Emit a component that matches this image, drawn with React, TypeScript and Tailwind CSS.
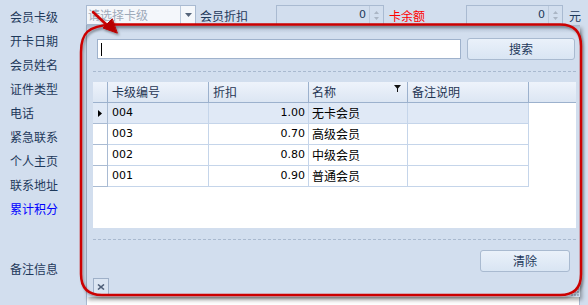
import React from 'react'

const labels = ['会员卡级', '开卡日期', '会员姓名', '证件类型', '电话', '紧急联系', '个人主页', '联系地址', '累计积分']

const rows = [
  { code: '004', rate: '1.00', name: '无卡会员', active: true },
  { code: '003', rate: '0.70', name: '高级会员', active: false },
  { code: '002', rate: '0.80', name: '中级会员', active: false },
  { code: '001', rate: '0.90', name: '普通会员', active: false },
]

function Spin({ width }: { width: string }) {
  return (
    <div className={`flex h-[20px] ${width} border border-[#a9bad1] bg-[#d2deee]`}>
      <div className="flex-1 pr-[3px] text-right font-['DejaVu_Sans',sans-serif] text-[11px] leading-[18px] text-[#1e395b]">0</div>
      <div className="flex w-[14px] flex-col items-center justify-center gap-[3px] border-l border-[#bccadc]">
        <svg width="5" height="3" viewBox="0 0 5 3"><path d="M0 3 L2.5 0 L5 3 Z" fill="#aab5c4" /></svg>
        <svg width="5" height="3" viewBox="0 0 5 3"><path d="M0 0 L2.5 3 L5 0 Z" fill="#aab5c4" /></svg>
      </div>
    </div>
  )
}

export default function App() {
  return (
    <div className="relative h-[305px] w-[588px] overflow-hidden bg-[#d2deee] font-['Noto_Sans_CJK_SC',sans-serif] text-[12px] text-[#1e395b]">
      {/* form underneath */}
      <div className="flex flex-col pt-[5px]">
        <div className="flex h-[24px] items-start">
          <div className="w-[86px] pl-[10px] leading-[24px]">{labels[0]}</div>
          <div className="flex h-[20px] w-[110px] border border-[#a9bad1] bg-[#f4f7fb]">
            <div className="flex-1 pl-[1px] leading-[18px] text-[#9eaaba]">请选择卡级</div>
            <div className="flex w-[15px] items-center justify-center border-l border-[#bccadc]">
              <svg width="7" height="4" viewBox="0 0 7 4"><path d="M0 0 L7 0 L3.5 4 Z" fill="#56657a" /></svg>
            </div>
          </div>
          <div className="w-[80px] pl-[4px] leading-[22px]">会员折扣</div>
          <Spin width="w-[108px]" />
          <div className="w-[82px] pl-[5px] leading-[22px] text-[#ff0000]">卡余额</div>
          <Spin width="w-[97px]" />
          <div className="pl-[6px] leading-[22px]">元</div>
        </div>
        {labels.slice(1).map((l) => (
          <div key={l} className={`h-[24px] w-[86px] pl-[10px] leading-[24px] ${l === '累计积分' ? 'text-[#0000ff]' : ''}`}>{l}</div>
        ))}
        <div className="mt-[24px] flex items-start">
          <div className="w-[86px] pl-[10px] pt-[12px] leading-[24px]">备注信息</div>
          <div className="h-[80px] w-[494px] border border-[#a9bad1] bg-white" />
        </div>
      </div>

      {/* lookup popup */}
      <div className="absolute left-[86px] top-[25px] flex h-[272px] w-[494px] flex-col border-l border-[#98a8bc] bg-[#d2deee] shadow-[2px_3px_4px_rgba(0,0,0,0.35)]">
        <div className="absolute inset-x-0 top-0 h-[8px] bg-linear-to-b from-[#a8b6ca] to-[#d2deee]" />
        <div className="relative mt-[13px] ml-[10px] flex items-center gap-[6px]">
          <div className="flex h-[20px] w-[364px] items-center border border-[#9fb2cc] bg-white pl-[3px]">
            <div className="h-[13px] w-[1px] bg-black" />
          </div>
          <div className="flex h-[22px] w-[108px] items-center justify-center rounded-[3px] border border-[#a9bad0] bg-linear-to-b from-[#eaf1fa] to-[#d9e5f3]">搜索</div>
        </div>
        <div className="mt-[11px] ml-[6px] w-[483px] border-t border-dashed border-[#a9b9cf]" />
        <div className="mt-[10px] ml-[6px] h-[146px] w-[483px] bg-white text-black">
          <div className="flex h-[21px] border-b border-[#9cb1cd] bg-linear-to-b from-[#eef3fb] to-[#dce6f3] text-[#1f3553]">
            <div className="w-[15px] border-r border-[#9cb1cd]" />
            <div className="w-[101px] border-r border-[#9cb1cd] pl-[4px] leading-[20px]">卡级编号</div>
            <div className="w-[100px] border-r border-[#9cb1cd] pl-[4px] leading-[20px]">折扣</div>
            <div className="relative w-[99px] border-r border-[#9cb1cd] pl-[3px] leading-[20px]">
              名称
              <svg className="absolute right-[6px] top-[3px]" width="7" height="7" viewBox="0 0 7 7"><path d="M0 0 H7 L4 3.5 V7 H3 V3.5 Z" fill="#111" /></svg>
            </div>
            <div className="w-[121px] border-r border-[#9cb1cd] pl-[4px] leading-[20px]">备注说明</div>
            <div className="flex-1" />
          </div>
          {rows.map((r) => (
            <div key={r.code} className={`flex h-[21px] w-[436px] ${r.active ? 'bg-[#e0e9f6]' : 'bg-white'}`}>
              <div className="flex w-[15px] items-center justify-center border-r border-b border-[#a9bbd3]">
                {r.active && <svg width="4" height="7" viewBox="0 0 4 7"><path d="M0 0 L4 3.5 L0 7 Z" fill="#000" /></svg>}
              </div>
              <div className="w-[101px] border-r border-b border-[#c5d5ea] pl-[4px] font-['DejaVu_Sans',sans-serif] text-[11px] leading-[20px]">{r.code}</div>
              <div className="w-[100px] border-r border-b border-[#c5d5ea] pr-[3px] text-right font-['DejaVu_Sans',sans-serif] text-[11px] leading-[20px]">{r.rate}</div>
              <div className="w-[99px] border-r border-b border-[#c5d5ea] pl-[3px] leading-[20px]">{r.name}</div>
              <div className="w-[121px] border-r border-b border-[#c5d5ea]" />
            </div>
          ))}
        </div>
        <div className="mt-[11px] ml-[6px] w-[483px] border-t border-dashed border-[#a9b9cf]" />
        <div className="mt-[10px] ml-[393px] flex h-[22px] w-[90px] items-center justify-center rounded-[3px] border border-[#a9bad0] bg-linear-to-b from-[#eaf1fa] to-[#d9e5f3]">清除</div>
        <div className="mt-[6px] ml-[6px] flex h-[17px] w-[16px] items-center justify-center border border-[#9fb0c8] bg-[#dbe5f2]">
          <svg width="8" height="6" viewBox="0 0 8 6"><path d="M1 0.5 L7 5.5 M7 0.5 L1 5.5" stroke="#4f5f78" strokeWidth="1.6" /></svg>
        </div>
        <svg className="absolute right-[1px] bottom-[1px]" width="8" height="8" viewBox="0 0 8 8">
          <rect x="6" y="0" width="2" height="2" fill="#a3b3c8" />
          <rect x="3" y="3" width="2" height="2" fill="#a3b3c8" />
          <rect x="6" y="3" width="2" height="2" fill="#a3b3c8" />
          <rect x="0" y="6" width="2" height="2" fill="#a3b3c8" />
          <rect x="3" y="6" width="2" height="2" fill="#a3b3c8" />
          <rect x="6" y="6" width="2" height="2" fill="#a3b3c8" />
        </svg>
      </div>

      {/* red annotation */}
      <svg className="pointer-events-none absolute left-0 top-0" width="588" height="305" viewBox="0 0 588 305">
        <defs>
          <filter id="sh" x="-10%" y="-10%" width="120%" height="120%">
            <feDropShadow dx="1.5" dy="2" stdDeviation="1" floodColor="#000" floodOpacity="0.35" />
          </filter>
        </defs>
        <g filter="url(#sh)" fill="none" stroke="#cc0000" strokeWidth="2.5" strokeLinecap="round">
          <path d="M81 52 C81 33 88 26 112 24.5 L560 24.5 Q581 24.5 581 46 L581 274 Q581 295 560 295 L102 295 Q81 295 81 274 Z" />
          <path d="M93 12 L110 28" />
          <path d="M117 33 L103 28 L112 19 Z" fill="#b80000" stroke="#b80000" strokeWidth="1" strokeLinejoin="round" />
        </g>
      </svg>
    </div>
  )
}
